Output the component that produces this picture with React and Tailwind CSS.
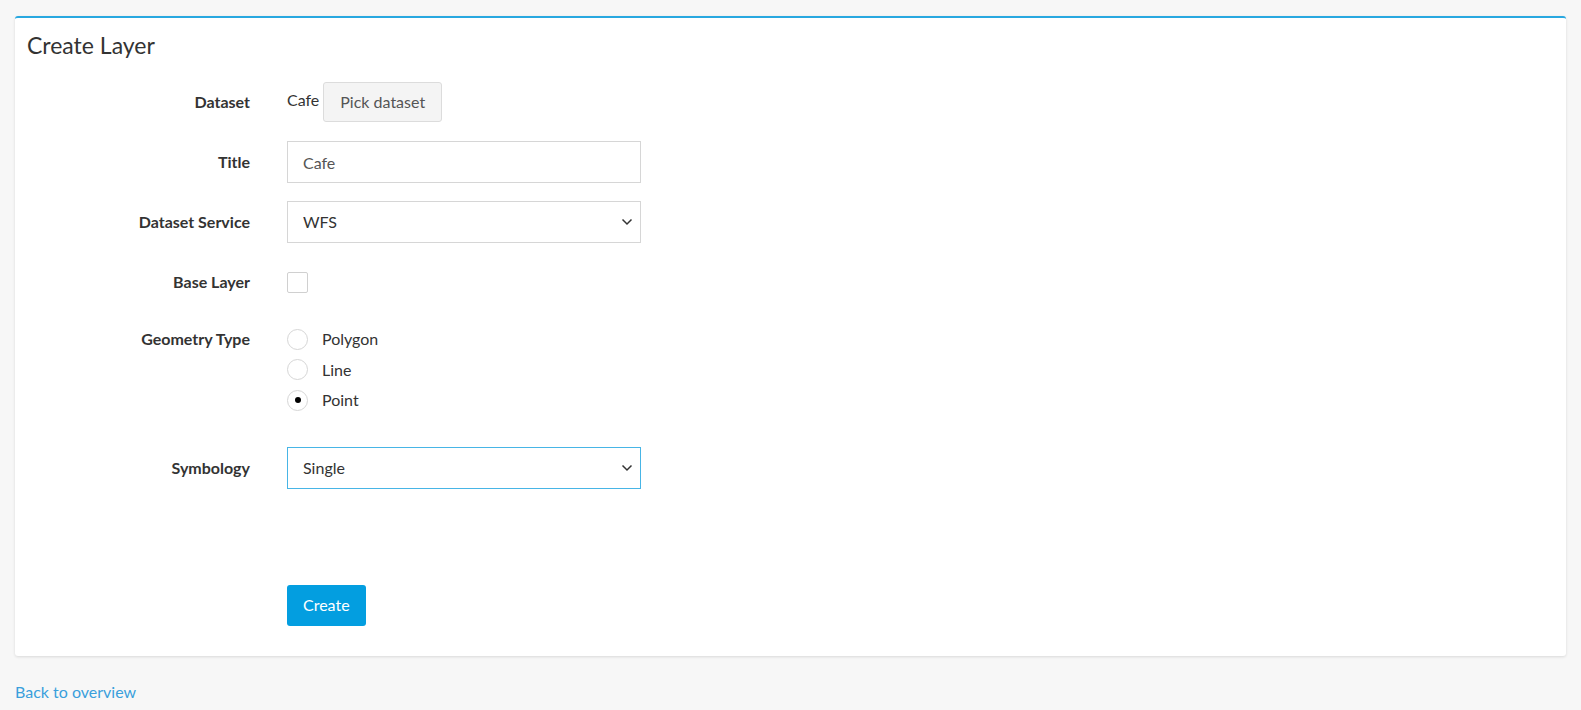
import { useState } from "react";

/* ================= SMALL PARTS ================= */

function Chevron(){
return(
<svg width="12" height="8" viewBox="0 0 12 8" className="pointer-events-none absolute right-[8px] top-1/2 -translate-y-1/2">
<path d="M1.5 1.5 L6 6 L10.5 1.5" fill="none" stroke="#333" strokeWidth="1.5"/>
</svg>
);
}

function Row({label,children,className=""}){
return(
<div className={"flex items-center "+className}>
<label className="w-[223px] shrink-0 text-right text-[16px] font-bold text-[#333]">
{label}
</label>
<div className="ml-[37px] flex items-center">
{children}
</div>
</div>
);
}

export default function App(){

const [title,setTitle] = useState("Cafe");
const [service,setService] = useState("WFS");
const [baseLayer,setBaseLayer] = useState(false);
const [geometry,setGeometry] = useState("Point");
const [symbology,setSymbology] = useState("Single");

const geometries = ["Polygon","Line","Point"];

return(

<div className="min-h-screen bg-[#f7f7f7] pt-[16px] font-['Lato',sans-serif] text-[#333]">

{/* CARD */}

<div className="mx-[15px] rounded-[3px] border-t-2 border-[#29a8e0] bg-white px-[12px] pb-[30px] shadow-[0_1px_3px_rgba(0,0,0,0.12)]">

<h1 className="pt-[15px] text-[23px] leading-[24px] text-[#333]">
Create Layer
</h1>

{/* DATASET */}

<Row label="Dataset" className="mt-[25px] h-[40px]">
<span className="-mt-[4px] text-[16px] text-[#333]">Cafe</span>
<button className="ml-[4px] h-[40px] rounded-[3px] border border-[#dcdcdc] bg-[#f4f4f4] px-[16px] text-[16px] text-[#555]">
Pick dataset
</button>
</Row>

{/* TITLE */}

<Row label="Title" className="mt-[19px] h-[42px]">
<input
value={title}
onChange={(e)=>setTitle(e.target.value)}
className="h-[42px] w-[354px] border border-[#d6d6d6] bg-white px-[15px] text-[16px] text-[#555] outline-none"
/>
</Row>

{/* SERVICE */}

<Row label="Dataset Service" className="mt-[18px] h-[42px]">
<div className="relative">
<select
value={service}
onChange={(e)=>setService(e.target.value)}
className="h-[42px] w-[354px] appearance-none border border-[#d6d6d6] bg-white px-[15px] text-[16px] text-[#333] outline-none"
>
<option>WFS</option>
<option>WMS</option>
</select>
<Chevron/>
</div>
</Row>

{/* BASE LAYER */}

<Row label="Base Layer" className="mt-[18px] h-[42px]">
<button
onClick={()=>setBaseLayer(!baseLayer)}
className="mt-[1px] h-[21px] w-[21px] rounded-[2px] border border-[#d0d0d0] bg-white"
/>
</Row>

{/* GEOMETRY TYPE */}

<div className="mt-[21px] flex items-start">
<label className="flex h-[30px] w-[223px] shrink-0 items-center justify-end text-[16px] font-bold text-[#333]">
Geometry Type
</label>
<div className="ml-[37px] flex flex-col">
{geometries.map(g=>(
<div
key={g}
onClick={()=>setGeometry(g)}
className="flex h-[30.5px] cursor-pointer items-center"
>
<span className="flex h-[21px] w-[21px] items-center justify-center rounded-full border border-[#d6d6d6] bg-white">
{geometry===g && <span className="h-[6px] w-[6px] rounded-full bg-black"/>}
</span>
<span className="ml-[14px] text-[16px] text-[#333]">{g}</span>
</div>
))}
</div>
</div>

{/* SYMBOLOGY */}

<Row label="Symbology" className="mt-[31px] h-[42px]">
<div className="relative">
<select
value={symbology}
onChange={(e)=>setSymbology(e.target.value)}
className="h-[42px] w-[354px] appearance-none border border-[#47b5e6] bg-white px-[15px] text-[16px] text-[#333] outline-none"
>
<option>Single</option>
<option>Categorized</option>
</select>
<Chevron/>
</div>
</Row>

{/* CREATE */}

<div className="mt-[96px] pl-[260px]">
<button className="h-[41px] rounded-[3px] bg-[#039ee0] px-[16px] text-[16px] text-white">
Create
</button>
</div>

</div>

{/* BACK */}

<div className="px-[15px] pt-[24px]">
<a href="#" className="text-[16px] text-[#3a9fdc]">
Back to overview
</a>
</div>

</div>

);

}
